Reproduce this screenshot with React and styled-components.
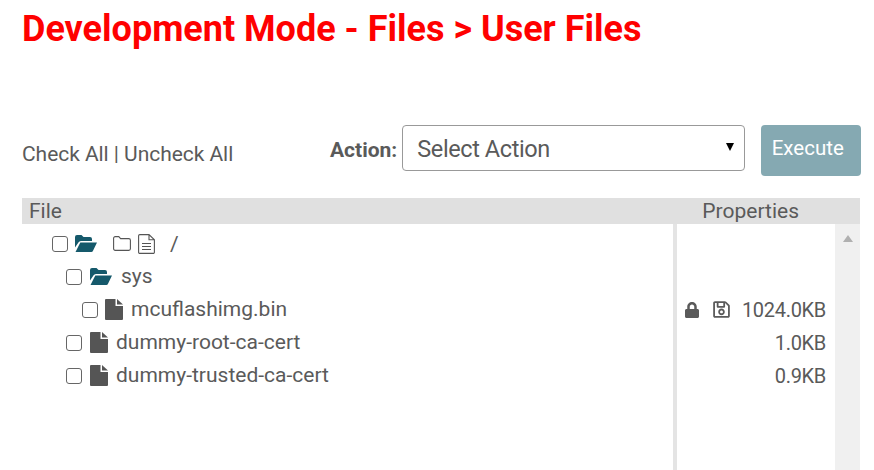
import React from 'react'
import styled, { createGlobalStyle } from 'styled-components'
import { FaLock, FaRegSave } from 'react-icons/fa'

const Global = createGlobalStyle`
	html, body {
		margin: 0;
		background: #fff;
		overflow: hidden;
	}
	body {
		font-family: Roboto, "Liberation Sans", sans-serif;
		color: #5a5a5a;
	}
`

const Page = styled.div`
	width: 874px;
	height: 470px;
	padding: 9px 14px 0 22px;
	box-sizing: border-box;
	overflow: hidden;
`

const Title = styled.h1`
	margin: 0;
	color: #f00;
	font-size: 36px;
	line-height: 40px;
	font-weight: 700;
`

const Toolbar = styled.div`
	display: flex;
	align-items: flex-start;
	margin-top: 76px;
	height: 60px;
	> * {
		flex: none;
	}
`

const CheckLinks = styled.div`
	width: 308px;
	font-size: 21px;
	letter-spacing: -0.05px;
	line-height: 24px;
	padding-top: 17px;
`

const ActionLabel = styled.label`
	font-size: 21px;
	line-height: 24px;
	font-weight: 700;
	margin-right: 5px;
	padding-top: 13px;
`

const Select = styled.div`
	position: relative;
	width: 343px;
	height: 46px;
	box-sizing: border-box;
	border: 1px solid #999;
	border-radius: 4px;
	padding-left: 14px;
	font-size: 23.5px;
	letter-spacing: -0.4px;
	line-height: 46px;
	margin-right: 16px;
`

const Caret = styled.span`
	position: absolute;
	right: 10px;
	top: 17px;
	border-left: 4.5px solid transparent;
	border-right: 4.5px solid transparent;
	border-top: 8px solid #000;
`

const Execute = styled.button`
	width: 100px;
	height: 51px;
	border: 0;
	border-radius: 4px;
	background: #85a9b2;
	color: #fff;
	font: 400 20.5px Roboto, sans-serif;
	padding: 0 7px 5px 0;
`

const Header = styled.div`
	display: flex;
	justify-content: space-between;
	margin-top: 13px;
	height: 26px;
	background: #e0e0e0;
	font-size: 21px;
	line-height: 26px;
	padding: 0 61px 0 7px;
`

const Body = styled.div`
	display: flex;
	height: 300px;
`

const Tree = styled.div`
	width: 651px;
	border-right: 4px solid #e4e4e4;
	padding-top: 3px;
`

const Row = styled.div`
	display: flex;
	align-items: center;
	height: 33px;
	padding-left: ${p => p.$indent}px;
	font-size: 21px;
`

const Check = styled.span`
	width: 16px;
	height: 16px;
	box-sizing: border-box;
	border: 1.5px solid #666;
	border-radius: 3px;
	background: #fff;
	margin-right: ${p => p.$gap}px;
`

const Icon = styled.svg`
	flex: none;
	margin-right: ${p => p.$gap || 0}px;
	fill: ${p => p.$color || '#555'};
`

const Name = styled.span`
	line-height: 33px;
`

const Root = styled.span`
	margin-left: 2px;
`

const Props = styled.div`
	width: 158px;
	padding-top: 3px;
`

const PropRow = styled.div`
	display: flex;
	align-items: center;
	height: 33px;
	padding: 0 9px 0 7px;
	font-size: 20px;
`

const SaveIcon = styled(FaRegSave)`
	margin-left: 12px;
`

const Size = styled.span`
	margin-left: auto;
	letter-spacing: -0.3px;
`

const Scrollbar = styled.div`
	position: relative;
	width: 25px;
	background: #f0f0f0;
`

const ScrollUp = styled.span`
	position: absolute;
	left: 8px;
	top: 11px;
	border-left: 5px solid transparent;
	border-right: 5px solid transparent;
	border-bottom: 7px solid #b0b0b0;
`

const OpenFolder = ({ gap }) => (
	<Icon width="22" height="17" viewBox="0 0 22 17" $color="#15596b" $gap={gap}>
		<path d="M0 12.5V2a2 2 0 0 1 2-2h4.5l2 2H15a2 2 0 0 1 2 2v2H6a3 3 0 0 0-2.6 1.5z" />
		<path d="M5.3 7.5H22l-4 8.2a2 2 0 0 1-1.7 1.3H.5z" />
	</Icon>
)

const FileIcon = ({ gap }) => (
	<Icon width="18" height="21" viewBox="0 0 18 21" $gap={gap}>
		<path d="M0 1a1 1 0 0 1 1-1h9.500v7H18v13a1 1 0 0 1-1 1H1a1 1 0 0 1-1-1z" />
		<path d="M12 0l6 5.500h-6z" />
	</Icon>
)

const PlainFolder = ({ gap }) => (
	<Icon width="18" height="15" viewBox="0 0 18 15" $gap={gap}>
		<path fill="none" stroke="#555" strokeWidth="1.1" d="M.6 2.200A1.600 1.600 0 0 1 2.200.6h3.600l1.800 2h8.200a1.600 1.600 0 0 1 1.600 1.600v8.600a1.600 1.600 0 0 1-1.600 1.600H2.200a1.600 1.600 0 0 1-1.600-1.600z" />
	</Icon>
)

const TextFile = ({ gap }) => (
	<Icon width="17" height="20" viewBox="0 0 17 20" $gap={gap}>
		<path fill="none" stroke="#555" strokeWidth="1.1" d="M.6 1.800A1.200 1.200 0 0 1 1.800.6H11l5.400 5.200v12.400a1.200 1.200 0 0 1-1.200 1.200H1.800a1.200 1.200 0 0 1-1.200-1.200zM11 .6v5.200h5.400M4 9.500h9M4 12.500h9M4 15.500h9" />
	</Icon>
)

const App = () => (
	<Page>
		<Global />
		<Title>Development Mode - Files &gt; User Files</Title>
		<Toolbar>
			<CheckLinks>Check All | Uncheck All</CheckLinks>
			<ActionLabel>Action:</ActionLabel>
			<Select>Select Action<Caret /></Select>
			<Execute>Execute</Execute>
		</Toolbar>
		<Header><span>File</span><span>Properties</span></Header>
		<Body>
			<Tree>
				<Row $indent={30}>
					<Check $gap={7} />
					<OpenFolder gap={16} />
					<PlainFolder gap={7} />
					<TextFile gap={13} />
					<Root>/</Root>
				</Row>
				<Row $indent={44}>
					<Check $gap={8} />
					<OpenFolder gap={9} />
					<Name>sys</Name>
				</Row>
				<Row $indent={60}>
					<Check $gap={7} />
					<FileIcon gap={8} />
					<Name>mcuflashimg.bin</Name>
				</Row>
				<Row $indent={44}>
					<Check $gap={8} />
					<FileIcon gap={8} />
					<Name>dummy-root-ca-cert</Name>
				</Row>
				<Row $indent={44}>
					<Check $gap={8} />
					<FileIcon gap={8} />
					<Name>dummy-trusted-ca-cert</Name>
				</Row>
			</Tree>
			<Props>
				<PropRow />
				<PropRow />
				<PropRow>
					<FaLock size={16} />
					<SaveIcon size={19} />
					<Size>1024.0KB</Size>
				</PropRow>
				<PropRow><Size>1.0KB</Size></PropRow>
				<PropRow><Size>0.9KB</Size></PropRow>
			</Props>
			<Scrollbar><ScrollUp /></Scrollbar>
		</Body>
	</Page>
)

export default App
